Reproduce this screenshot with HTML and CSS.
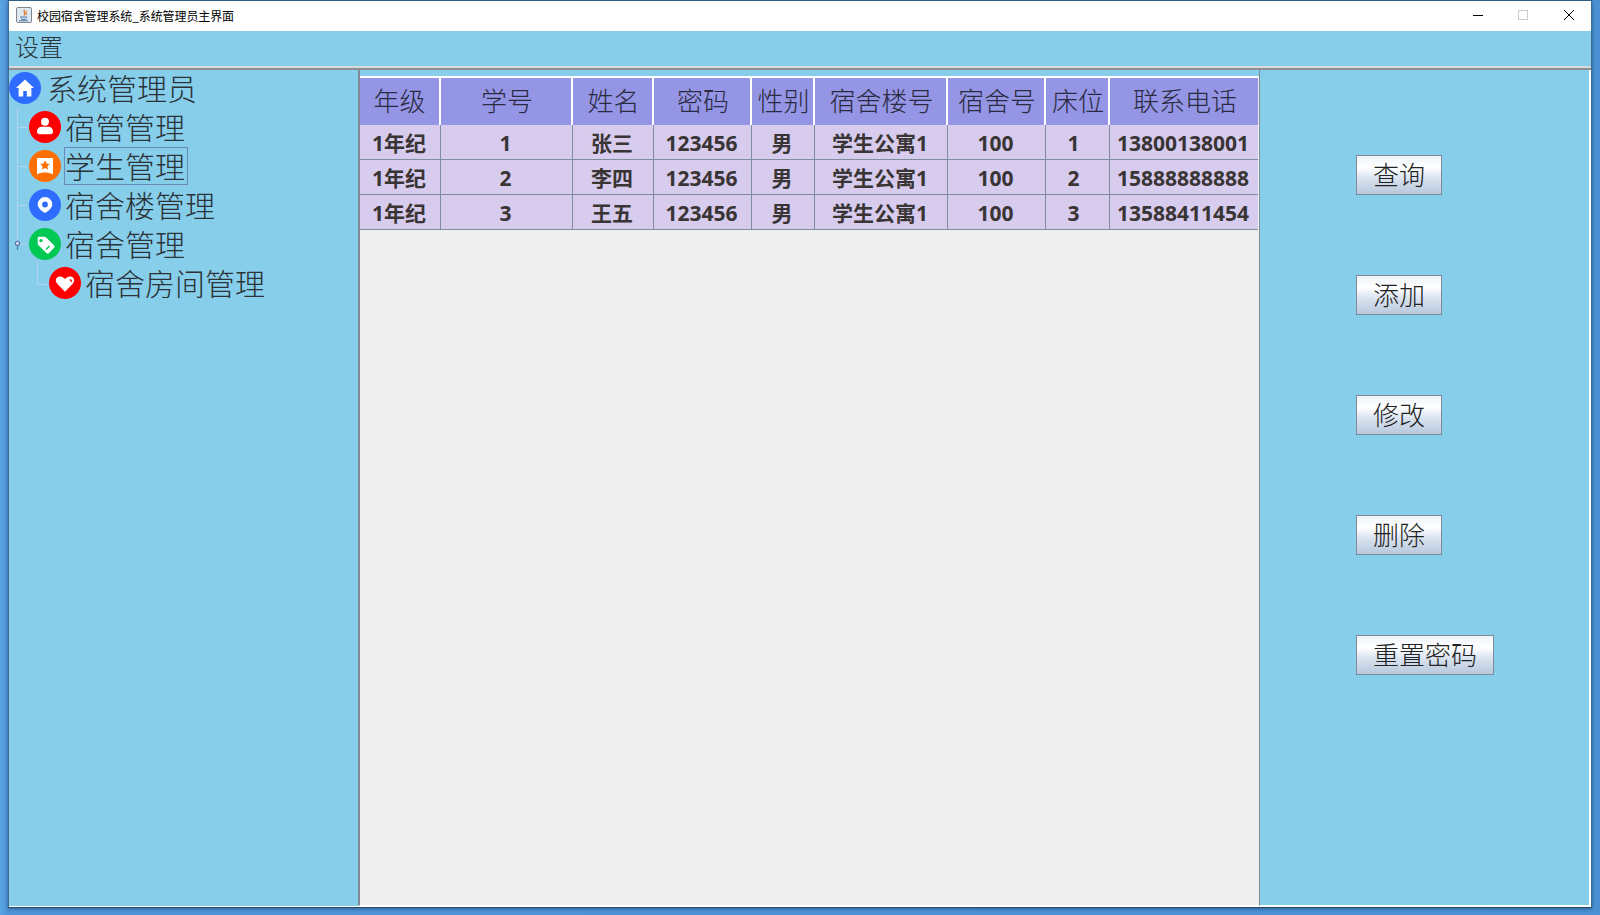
FILE: index.html
```html
<!DOCTYPE html>
<html lang="zh-CN">
<head>
<meta charset="utf-8">
<title>校园宿舍管理系统_系统管理员主界面</title>
<link rel="stylesheet" href="styles.css">
</head>
<body>
<div class="window">
  <header class="titlebar">
    <div class="title-left">
      <svg class="app-icon" viewBox="0 0 16 16"><rect x=".5" y=".5" width="15" height="15" rx="1.5" fill="#dfe7ef" stroke="#7b8794"/><path d="M8.500 2.500C6.500 5 10.500 6 8 8.500M10.500 4C9 5.500 11 6.500 10 8" fill="none" stroke="#d9772b" stroke-width="1.2"/><path d="M4 10h7.500M5 12.200h5.500M3 13.800h9" stroke="#4a78a8" stroke-width="1.1"/></svg>
      <span class="title-text">校园宿舍管理系统_系统管理员主界面</span>
    </div>
    <div class="win-controls">
      <span class="win-btn"><svg viewBox="0 0 12 12" width="12" height="12"><path d="M1 6.500h10" stroke="#000"/></svg></span>
      <span class="win-btn"><svg viewBox="0 0 12 12" width="12" height="12"><rect x="1.500" y="1.500" width="9" height="9" fill="none" stroke="#ccc"/></svg></span>
      <span class="win-btn"><svg viewBox="0 0 12 12" width="12" height="12"><path d="M1 1l10 10M11 1L1 11" stroke="#000" fill="none"/></svg></span>
    </div>
  </header>
  <nav class="menubar"><span class="menu-item">设置</span></nav>
  <div class="divider"></div>
  <main class="content">
    <aside class="tree">
      <div class="row level0">
        <svg class="node" viewBox="0 0 32 32"><circle cx="16" cy="16" r="16" fill="#2d6cff"/><path d="M16 7.500L7 16h2.600v8.500h4.600v-5.500h3.600v5.500h4.600V16H25z" fill="#fff"/></svg>
        <span class="label">系统管理员</span>
      </div>
      <div class="row level1">
        <svg class="node" viewBox="0 0 32 32"><circle cx="16" cy="16" r="16" fill="#ff0000"/><circle cx="16" cy="10.700" r="4" fill="#fff"/><path d="M8 20.500c0-2.900 2-4.800 4.500-4.800h7c2.500 0 4.500 1.900 4.500 4.800 0 1.700-1 2.800-2.500 2.800h-11C9 23.300 8 22.200 8 20.500z" fill="#fff"/></svg>
        <span class="label">宿管管理</span>
      </div>
      <div class="row level1">
        <svg class="node" viewBox="0 0 32 32"><circle cx="16" cy="16" r="16" fill="#ff6f00"/><path d="M8 8h16v16.500c-5-2.600-11-2.600-16 0z" fill="#fff"/><path d="M16 10.500l1.500 3 3.300.4-2.400 2.300.6 3.300-3-1.600-3 1.600.6-3.300-2.400-2.300 3.300-.4z" fill="#ff6f00"/></svg>
        <span class="label selected">学生管理</span>
      </div>
      <div class="row level1">
        <svg class="node" viewBox="0 0 32 32"><circle cx="16" cy="16" r="16" fill="#2d6cff"/><path fill-rule="evenodd" d="M16 8a7.300 7.300 0 0 0-7.300 7.300c0 4 4.300 6.900 7.300 8.700 3-1.800 7.300-4.700 7.300-8.700A7.300 7.300 0 0 0 16 8zm0 4.600a2.900 2.900 0 1 1 0 5.800 2.900 2.900 0 0 1 0-5.800z" fill="#fff"/></svg>
        <span class="label">宿舍楼管理</span>
      </div>
      <div class="row level1 has-handle">
        <svg class="handle" viewBox="0 0 8 12"><circle cx="4" cy="4" r="2.500" fill="#e8eef8" stroke="#5a70b0" stroke-width="1.500"/><path d="M4 6.500V12" stroke="#5a70b0" stroke-width="1.500"/></svg>
        <svg class="node" viewBox="0 0 32 32"><circle cx="16" cy="16" r="16" fill="#00c853"/><path fill-rule="evenodd" d="M9.500 8.700h6c.6 0 1 .2 1.400.6l8 8c.8.800.8 2 0 2.800l-4.800 4.800c-.8.800-2 .8-2.800 0l-8-8c-.4-.4-.6-.9-.6-1.400V9.700c0-.6.400-1 .8-1zm2.500 2.200a1.700 1.700 0 1 0 0 3.400 1.700 1.700 0 0 0 0-3.400z" fill="#fff"/><path d="M17 21.500l3.500-3.500" stroke="#00c853" stroke-width="1.500"/></svg>
        <span class="label">宿舍管理</span>
      </div>
      <div class="row level2">
        <svg class="node" viewBox="0 0 32 32"><circle cx="16" cy="16" r="16" fill="#ff0000"/><path d="M16 24.700L8.500 17C6 14.500 6.500 11 9 10c2.500-1 5 0 7 2 2-2 4.500-3 7-2 2.500 1 3 4.500.5 7z" fill="#fff"/><path d="M20.800 12.600c1 .4 1.700 1.300 1.800 2.300" stroke="#ff0000" stroke-width="1.300" fill="none"/></svg>
        <span class="label">宿舍房间管理</span>
      </div>
    </aside>
    <section class="table-pane">
      <table class="grid">
        <colgroup>
          <col class="c1"><col class="c2"><col class="c3"><col class="c4"><col class="c5"><col class="c6"><col class="c7"><col class="c8"><col class="c9">
        </colgroup>
        <thead>
          <tr><th>年级</th><th>学号</th><th>姓名</th><th>密码</th><th>性别</th><th>宿舍楼号</th><th>宿舍号</th><th>床位</th><th>联系电话</th></tr>
        </thead>
        <tbody>
          <tr><td>1年纪</td><td>1</td><td>张三</td><td>123456</td><td>男</td><td>学生公寓1</td><td>100</td><td class="bed">1</td><td>13800138001</td></tr>
          <tr><td>1年纪</td><td>2</td><td>李四</td><td>123456</td><td>男</td><td>学生公寓1</td><td>100</td><td class="bed">2</td><td>15888888888</td></tr>
          <tr><td>1年纪</td><td>3</td><td>王五</td><td>123456</td><td>男</td><td>学生公寓1</td><td>100</td><td class="bed">3</td><td>13588411454</td></tr>
        </tbody>
      </table>
    </section>
    <aside class="actions">
      <button class="btn">查询</button>
      <button class="btn">添加</button>
      <button class="btn">修改</button>
      <button class="btn">删除</button>
      <button class="btn">重置密码</button>
    </aside>
  </main>
</div>
</body>
</html>
```
FILE: styles.css
```css
* { box-sizing: border-box; }
html, body { margin: 0; height: 915px; overflow: hidden; }
body {
  padding: 0 8px 7px 8px;
  background: linear-gradient(90deg, #5aa5e6 0, #4d93d6 8px, #4a90d2 100%);
  font-family: "Noto Sans CJK SC", "Liberation Serif", serif;
  color: #333;
}
.window {
  height: 908px;
  display: flex;
  flex-direction: column;
  background: #87ceeb;
  border-top: 1px solid #2f5f86;
  border-bottom: 1px solid #2b4a66;
  border-left: 1px solid #3f6d96;
  border-right: 1px solid #3f6d96;
  box-shadow: 0 1px 3px rgba(20, 50, 90, .5);
}
.titlebar {
  height: 30px;
  flex: none;
  padding-bottom: 2px;
  background: #fff;
  display: flex;
  align-items: center;
  justify-content: space-between;
}
.title-left { display: flex; align-items: center; gap: 5px; padding-left: 7px; }
.app-icon { width: 16px; height: 16px; }
.title-text { font-size: 12px; letter-spacing: -.1px; color: #000; }
.win-controls { display: flex; }
.win-btn { width: 45px; height: 28px; display: flex; align-items: center; justify-content: center; }
.win-btn:last-child { margin-left: 1px; }
.menubar { height: 35px; flex: none; padding: 0 0 6px 6px; display: flex; align-items: center; }
.menu-item { font-size: 24px; line-height: 29px; color: #2b3338; font-weight: 300; }
.divider { height: 4px; flex: none; border-top: 2px solid #d9d9d9; background: #8a8f96; }
.content { flex: 1; min-height: 0; display: flex; border-bottom: 1px solid #fff; }

.tree { width: 349px; flex: none; background: #87ceeb; }
.row { height: 39px; padding-top: 2px; display: flex; align-items: flex-start; gap: 3px; position: relative; }
.level0 { padding-left: 0; gap: 5px; }
.level1 { padding-left: 20px; }
.level2 { padding-left: 40px; }
.node { width: 32px; height: 32px; flex: none; }
.label {
  font-size: 30px;
  font-weight: 300;
  line-height: 34px;
  height: 38px;
  margin-top: -3px;
  padding: 0 2px 0 0;
  border: 1px solid transparent;
  color: #2b3338;
  white-space: nowrap;
}
.label.selected { border-color: #6a87be; }
.level1::before {
  content: "";
  position: absolute;
  left: 8px;
  top: 0;
  width: 1px;
  height: 39px;
  background: #b8d3ee;
}
.level1::after {
  content: "";
  position: absolute;
  left: 8px;
  top: 18px;
  width: 10px;
  height: 1px;
  background: #b8d3ee;
}
.has-handle::before { height: 19px; }
.level2::before {
  content: "";
  position: absolute;
  left: 28px;
  top: -4px;
  width: 10px;
  height: 23px;
  border-left: 1px solid #b8d3ee;
  border-bottom: 1px solid #b8d3ee;
}
.handle { position: absolute; left: 5px; top: 14px; width: 7px; height: 10px; z-index: 1; }

.table-pane {
  flex: 1;
  min-width: 0;
  background: #eeeeee;
  border-left: 2px solid #7f8a96;
  border-bottom: 1px solid #fff;
  padding-top: 6px;
  background-image: linear-gradient(#87ceeb 0, #87ceeb 6px, transparent 6px);
}
.grid { border-collapse: separate; border-spacing: 0; table-layout: fixed; width: 898px; }
.c1 { width: 81px; } .c2 { width: 132px; } .c3 { width: 81px; } .c4 { width: 98px; }
.c5 { width: 63px; } .c6 { width: 133px; } .c7 { width: 98px; } .c8 { width: 64px; } .c9 { width: 148px; }
.grid th {
  height: 49px;
  padding: 0 0 4px 2px;
  background: #9595e6;
  border-top: 2px solid #fff;
  border-right: 2px solid #fff;
  font-size: 26px;
  font-weight: 300;
  color: #2a2a40;
  white-space: nowrap;
}
.grid th:first-child { padding-left: 0; }
.grid th:last-child { border-right: 0; }
.grid td {
  height: 35px;
  padding: 2px 2px 0 0;
  background: #d7cbee;
  border-right: 1px solid #7e8ea0;
  border-bottom: 1px solid #7e8ea0;
  border-top: 0;
  text-align: center;
  font-family: "Open Sans", "Noto Sans CJK SC", sans-serif;
  font-size: 21px;
  font-weight: 700;
  line-height: 32px;
  color: #3a3535;
  white-space: nowrap;
  overflow: hidden;
}
.grid td.bed { padding-right: 8px; }
.grid td:last-child { border-right: 0; }
.actions {
  width: 332px;
  flex: none;
  border-left: 1px solid #7f8a96;
  border-right: 2px solid #fff;
  border-bottom: 1px solid #fff;
  padding: 85px 0 0 96px;
  display: flex;
  flex-direction: column;
  align-items: flex-start;
  gap: 80px;
}
.btn {
  height: 40px;
  min-width: 86px;
  padding: 0 16px 2px;
  border: 1px solid #7f8a9a;
  background: linear-gradient(#eef3f9 0, #ffffff 30%, #d8e2ef 60%, #b8c8dc 100%);
  font-family: inherit;
  font-size: 26px;
  font-weight: 300;
  line-height: 34px;
  color: #222;
  white-space: nowrap;
}
```
